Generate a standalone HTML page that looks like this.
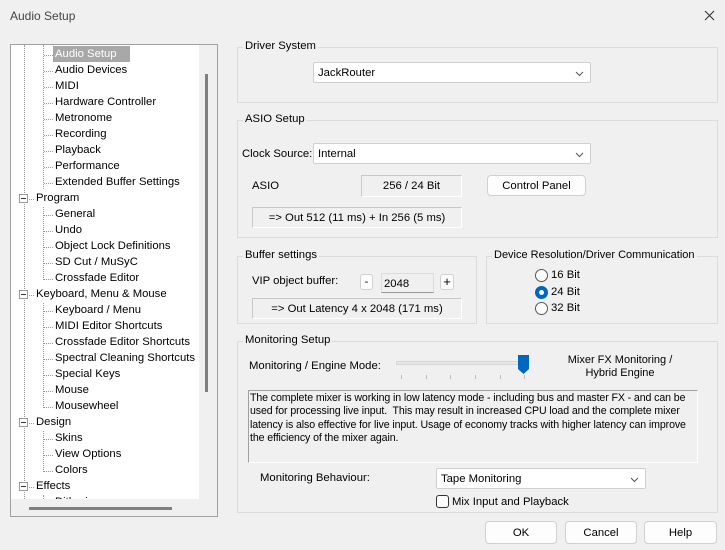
<!DOCTYPE html><html><head><style>
*{margin:0;padding:0;box-sizing:border-box}
body{width:725px;height:550px;background:#f0f0f0;font-family:"Liberation Sans",sans-serif;font-size:11.3px;color:#000;position:relative;overflow:hidden}
.a{position:absolute;white-space:nowrap}
.g{position:absolute;border:1px solid #dcdcdc}
.gl{position:absolute;background:#f0f0f0;padding:0 2px;font-size:11.3px}
.cb{position:absolute;background:#fff;border:1px solid #d0d0d0;border-radius:2px;padding:4px 4px}
.cb svg{position:absolute;right:6px;top:8px}
.bx{position:absolute;border:1px solid #c8c8c8;border-right-color:#fff;border-bottom-color:#fff;text-align:center;line-height:20px}
.bt{position:absolute;background:#fdfdfd;border:1px solid #d0d0d0;border-radius:4px;text-align:center}
</style></head><body>
<div class="a" style="left:10px;top:9px;font-size:12px;color:#444">Audio Setup</div>
<svg class="a" style="left:704px;top:10px" width="11" height="11"><path d="M1 1L10 10M10 1L1 10" stroke="#333" stroke-width="1.1"/></svg>

<div class="a" style="left:10px;top:44px;width:208px;height:473px;border:1px solid #a0a0a0;background:#fff"></div>
<div class="a" style="left:199px;top:45px;width:18px;height:471px;background:#f0f0f0"></div>
<div class="a" style="left:11px;top:499px;width:188px;height:17px;background:#f0f0f0"></div>
<div class="a" style="left:205px;top:74px;width:3px;height:318px;background:#808080"></div>
<div class="a" style="left:29px;top:507px;width:143px;height:3px;background:#808080"></div>
<div class="a" style="left:24px;top:45px;height:454px;border-left:1px dotted #999"></div>
<div class="a" style="left:43px;top:45px;height:144px;border-left:1px dotted #999"></div>
<div class="a" style="left:43px;top:207px;height:73px;border-left:1px dotted #999"></div>
<div class="a" style="left:43px;top:303px;height:105px;border-left:1px dotted #999"></div>
<div class="a" style="left:43px;top:431px;height:41px;border-left:1px dotted #999"></div>
<div class="a" style="left:43px;top:495px;height:4px;border-left:1px dotted #999"></div>
<div class="a" style="left:53px;top:46px;width:77px;height:16px;background:#a8a8a8"></div>
<div id="tree"></div>
<script>
var items=[[1,"Audio Setup"],[1,"Audio Devices"],[1,"MIDI"],[1,"Hardware Controller"],[1,"Metronome"],[1,"Recording"],[1,"Playback"],[1,"Performance"],[1,"Extended Buffer Settings"],[0,"Program"],[1,"General"],[1,"Undo"],[1,"Object Lock Definitions"],[1,"SD Cut / MuSyC"],[1,"Crossfade Editor"],[0,"Keyboard, Menu & Mouse"],[1,"Keyboard / Menu"],[1,"MIDI Editor Shortcuts"],[1,"Crossfade Editor Shortcuts"],[1,"Spectral Cleaning Shortcuts"],[1,"Special Keys"],[1,"Mouse"],[1,"Mousewheel"],[0,"Design"],[1,"Skins"],[1,"View Options"],[1,"Colors"],[0,"Effects"]];
var h="";items.forEach(function(it,i){var y=48+i*16;
if(it[0]){h+='<div class="a" style="left:44px;top:'+(y+7)+'px;width:9px;border-top:1px dotted #999"></div><div class="a" style="left:55px;top:'+y+'px;'+(i==0?'color:#fff':'')+'">'+it[1]+'</div>';}
else{h+='<div class="a" style="left:19px;top:'+(y+2)+'px;width:9px;height:9px;border:1px solid #999;background:#fff"></div><div class="a" style="left:21px;top:'+(y+6)+'px;width:5px;border-top:1px solid #333"></div><div class="a" style="left:29px;top:'+(y+7)+'px;width:5px;border-top:1px dotted #999"></div><div class="a" style="left:36px;top:'+y+'px">'+it[1].replace("&","&amp;")+'</div>';}});
h+='<div class="a" style="left:55px;top:496px;height:3px;overflow:hidden">Dithering</div>';
document.getElementById("tree").innerHTML=h;
</script>

<div class="g" style="left:237px;top:47px;width:481px;height:56px"></div>
<div class="gl" style="left:243px;top:40px">Driver System</div>
<div class="cb" style="left:313px;top:62px;width:278px;height:21px">JackRouter<svg width="9" height="6"><path d="M1 1L4.5 4.5L8 1" fill="none" stroke="#555"/></svg></div>

<div class="g" style="left:237px;top:120px;width:481px;height:118px"></div>
<div class="gl" style="left:243px;top:113px">ASIO Setup</div>
<div class="a" style="left:242px;top:148px">Clock Source:</div>
<div class="cb" style="left:313px;top:143px;width:278px;height:21px">Internal<svg width="9" height="6"><path d="M1 1L4.5 4.5L8 1" fill="none" stroke="#555"/></svg></div>
<div class="a" style="left:252px;top:180px">ASIO</div>
<div class="bx" style="left:361px;top:175px;width:101px;height:22px">256 / 24 Bit</div>
<div class="bt" style="left:487px;top:175px;width:99px;height:21px;line-height:20px">Control Panel</div>
<div class="bx" style="left:252px;top:207px;width:210px;height:21px">=&gt; Out 512 (11 ms) + In 256 (5 ms)</div>

<div class="g" style="left:237px;top:256px;width:240px;height:68px"></div>
<div class="gl" style="left:243px;top:249px">Buffer settings</div>
<div class="a" style="left:252px;top:275px">VIP object buffer:</div>
<div class="bt" style="left:360px;top:274px;width:13px;height:16px;line-height:14px;border-radius:3px">-</div>
<div class="a" style="left:381px;top:273px;width:53px;height:20px;border:1px solid #ddd;border-bottom-color:#999;padding:4px 2px">2048</div>
<div class="bt" style="left:440px;top:274px;width:14px;height:16px;line-height:14px;border-radius:3px;font-size:13px">+</div>
<div class="bx" style="left:252px;top:298px;width:210px;height:21px">=&gt; Out Latency 4 x 2048 (171 ms)</div>

<div class="g" style="left:486px;top:256px;width:232px;height:68px"></div>
<div class="gl" style="left:492px;top:249px;font-size:11px">Device Resolution/Driver Communication</div>
<div class="a" style="left:535px;top:269px;width:13px;height:13px;border:1px solid #555;border-radius:50%;background:#fff"></div>
<div class="a" style="left:535px;top:286px;width:13px;height:13px;border-radius:50%;background:#0067c0"></div>
<div class="a" style="left:539px;top:290px;width:5px;height:5px;border-radius:50%;background:#fff"></div>
<div class="a" style="left:535px;top:302px;width:13px;height:13px;border:1px solid #555;border-radius:50%;background:#fff"></div>
<div class="a" style="left:551px;top:269px">16 Bit</div>
<div class="a" style="left:551px;top:286px">24 Bit</div>
<div class="a" style="left:551px;top:302px">32 Bit</div>

<div class="g" style="left:237px;top:341px;width:481px;height:172px"></div>
<div class="gl" style="left:243px;top:334px">Monitoring Setup</div>
<div class="a" style="left:249px;top:360px">Monitoring / Engine Mode:</div>
<div class="a" style="left:396px;top:361px;width:130px;height:4px;background:#e6e6e6;border:1px solid #d6d6d6"></div>
<svg class="a" style="left:517px;top:354px" width="13" height="21"><path d="M1 1H12V15L6.5 20L1 15Z" fill="#0067c0"/></svg>
<div id="tk"></div>
<script>var s="";[401,426,450,475,500,524].forEach(function(x){s+='<div class="a" style="left:'+x+'px;top:375px;width:1px;height:4px;background:#bbb"></div>'});document.getElementById("tk").innerHTML=s;</script>
<div class="a" style="left:566px;top:354px;width:108px;text-align:center;line-height:13px;font-size:11px">Mixer FX Monitoring /<br>Hybrid Engine</div>
<div class="a" style="left:248px;top:390px;width:450px;height:73px;border:1px solid #a0a0a0;border-right-color:#fff;border-bottom-color:#fff;padding:1px 1px;white-space:normal;line-height:13.3px;font-size:10.6px;letter-spacing:-0.1px">The complete mixer is working in low latency mode - including bus and master FX - and can be used for processing live input.&nbsp; This may result in increased CPU load and the complete mixer latency is also effective for live input. Usage of economy tracks with higher latency can improve the efficiency of the mixer again.</div>
<div class="a" style="left:260px;top:472px">Monitoring Behaviour:</div>
<div class="cb" style="left:436px;top:468px;width:210px;height:21px">Tape Monitoring<svg width="9" height="6"><path d="M1 1L4.5 4.5L8 1" fill="none" stroke="#555"/></svg></div>
<div class="a" style="left:436px;top:495px;width:13px;height:13px;border:1px solid #333;border-radius:3px;background:#fff"></div>
<div class="a" style="left:452px;top:496px">Mix Input and Playback</div>

<div class="bt" style="left:485px;top:521px;width:72px;height:23px;line-height:22px">OK</div>
<div class="bt" style="left:565px;top:521px;width:72px;height:23px;line-height:22px">Cancel</div>
<div class="bt" style="left:644px;top:521px;width:73px;height:23px;line-height:22px">Help</div>
</body></html>
